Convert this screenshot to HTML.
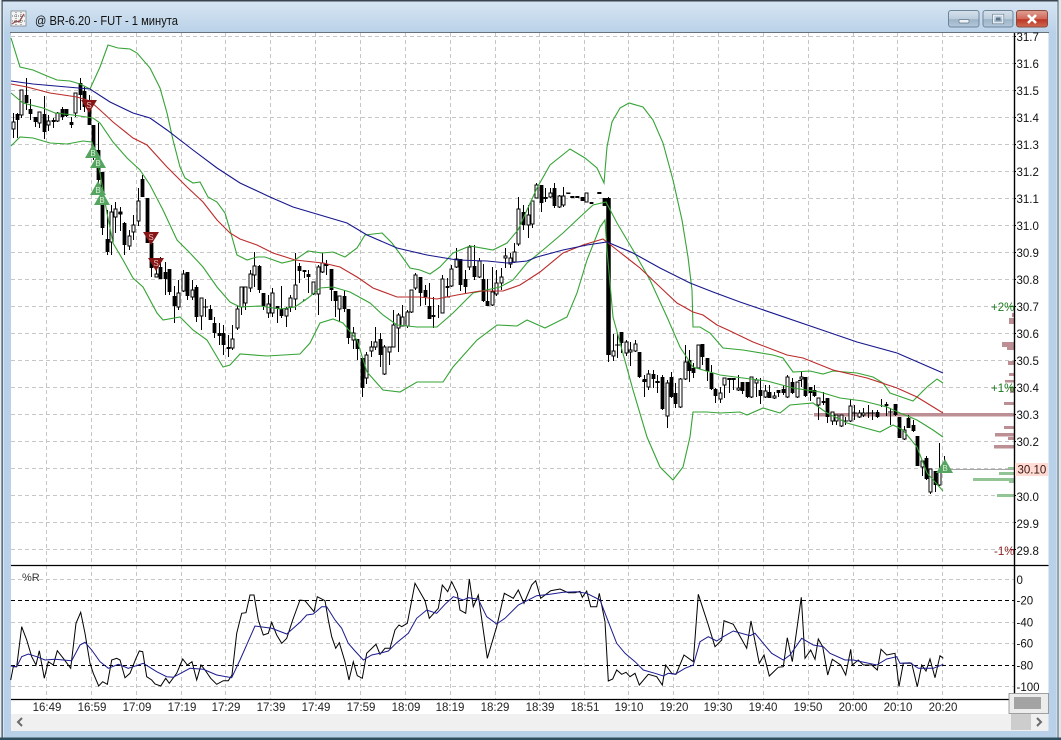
<!DOCTYPE html>
<html><head><meta charset="utf-8"><title>BR-6.20</title>
<style>
html,body{margin:0;padding:0;background:#fff;width:1061px;height:740px;overflow:hidden}
svg{display:block;font-family:"Liberation Sans",sans-serif}
</style></head><body>
<svg width="1061" height="740" viewBox="0 0 1061 740" xmlns="http://www.w3.org/2000/svg">
<defs>
<linearGradient id="tb" x1="0" y1="0" x2="0" y2="1"><stop offset="0" stop-color="#d8e6f3"/><stop offset="1" stop-color="#b9d1e8"/></linearGradient>
<linearGradient id="btn" x1="0" y1="0" x2="0" y2="1"><stop offset="0" stop-color="#d6e2ec"/><stop offset=".5" stop-color="#bccddd"/><stop offset=".55" stop-color="#9db3c7"/><stop offset="1" stop-color="#b4c9db"/></linearGradient>
<linearGradient id="cls" x1="0" y1="0" x2="0" y2="1"><stop offset="0" stop-color="#dfa193"/><stop offset=".5" stop-color="#d1695a"/><stop offset=".55" stop-color="#bb3626"/><stop offset="1" stop-color="#cf6a50"/></linearGradient>
</defs>
<!-- window frame -->
<rect width="1061" height="740" fill="#b9d1e8"/>
<rect x="0" y="0" width="1061" height="33" fill="url(#tb)"/>
<rect x="0" y="0" width="1061" height="1.5" fill="#39444f"/>
<rect x="0" y="0" width="2" height="740" fill="#e9eef2"/>
<rect x="1.5" y="0" width="1.2" height="740" fill="#3a4a58"/>
<rect x="3" y="2" width="1" height="736" fill="#d8e6f3"/>
<rect x="1056.5" y="2" width="1" height="736" fill="#dfeaf4"/>
<rect x="1058" y="0" width="3" height="740" fill="#dfe7ec"/>
<rect x="1057.5" y="0" width="1" height="740" fill="#45606f"/>
<rect x="0" y="737.5" width="1061" height="2.5" fill="#2f4f5e"/>
<rect x="10" y="32" width="1039" height="1.2" fill="#66727e"/>
<!-- client -->
<rect x="11" y="33" width="1037.5" height="681" fill="#fff"/>
<rect x="11" y="714" width="1037.5" height="17" fill="#f0f0f0"/>
<!-- title -->
<g><rect x="11" y="11" width="15" height="15" fill="#f4f4f4" stroke="#7a8591" stroke-width=".8"/>
<path d="M12 24l4-3 3 1 5-8" fill="none" stroke="#a04a4a" stroke-width="1.200"/><path d="M12 16h13M12 21h13M16 12v13M21 12v13" stroke="#444" stroke-width=".8" stroke-dasharray="1 1"/></g>
<text x="35" y="25" font-size="12.5" fill="#111" textLength="143" lengthAdjust="spacingAndGlyphs">@ BR-6.20 - FUT - 1 минута</text>
<!-- buttons -->
<rect x="948.5" y="10.5" width="30.5" height="16.5" rx="2.5" fill="url(#btn)" stroke="#6e8499"/>
<rect x="959" y="19.5" width="10" height="3.5" rx="1" fill="#eef3f7" stroke="#5f7488" stroke-width=".7"/>
<rect x="983" y="10.5" width="30" height="16.5" rx="2.5" fill="url(#btn)" stroke="#6e8499"/>
<rect x="993.5" y="15" width="9.5" height="8" fill="none" stroke="#f0f4f8" stroke-width="1.5"/><rect x="992.6" y="14.2" width="11.2" height="9.6" fill="none" stroke="#5f7488" stroke-width=".6"/><rect x="996" y="17.500" width="4.500" height="3" fill="#5f7488"/>
<rect x="1016.5" y="10.5" width="31" height="16.5" rx="2.5" fill="url(#cls)" stroke="#8a4a40"/>
<path d="M1028 15l8 8M1036 15l-8 8" stroke="#fff" stroke-width="2.6"/>
<!-- grid -->
<path d="M11 36.500H1014M11 63.500H1014M11 90.500H1014M11 117.500H1014M11 144.500H1014M11 171.500H1014M11 198.500H1014M11 225.500H1014M11 252.500H1014M11 279.500H1014M11 306.500H1014M11 333.500H1014M11 360.500H1014M11 387.500H1014M11 414.500H1014M11 441.500H1014M11 468.500H1014M11 495.500H1014M11 522.500H1014M11 549.500H1014M11 579.500H1014M11 622.500H1014M11 643.500H1014M11 686.500H1014" stroke="#c6c6c6" stroke-dasharray="4 3" fill="none"/>
<path d="M46.500 33V699M91.500 33V699M136.500 33V699M181.500 33V699M225.500 33V699M270.500 33V699M315.500 33V699M360.500 33V699M405.500 33V699M450.500 33V699M495.500 33V699M539.500 33V699M584.500 33V699M628.500 33V699M673.500 33V699M718.500 33V699M763.500 33V699M808.500 33V699M853.500 33V699M897.500 33V699M942.500 33V699" stroke="#c6c6c6" stroke-dasharray="4 3" fill="none"/>
<path d="M11 600.500H1014M11 665.500H1014" stroke="#000" stroke-dasharray="4 3" fill="none"/>
<!-- volume profile -->
<g fill="#bb8f93">
<rect x="1012" y="313" width="2" height="4"/><rect x="1009" y="318" width="5" height="6"/><rect x="1002" y="342" width="12" height="5"/><rect x="1007" y="347" width="7" height="3"/><rect x="1008" y="361" width="6" height="4"/><rect x="1009" y="373" width="5" height="3"/><rect x="1005" y="380" width="9" height="2.500"/><rect x="1010" y="388" width="4" height="5"/><rect x="1004" y="402" width="10" height="3"/><rect x="814" y="413" width="200" height="3.500"/><rect x="1004" y="426" width="10" height="3"/><rect x="995" y="433" width="19" height="3.500"/><rect x="1008" y="437" width="6" height="3"/><rect x="994" y="445" width="20" height="3.500"/>
</g>
<g fill="#93c496">
<rect x="1008" y="467" width="6" height="3"/><rect x="999" y="472" width="15" height="3"/><rect x="973" y="478" width="41" height="3"/><rect x="1009" y="481" width="5" height="2"/><rect x="997" y="494" width="17" height="3"/>
</g>
<path d="M948 469.500H1014" stroke="#a6a6a6"/>
<!-- wicks -->
<path stroke="#000" stroke-width="1" fill="none" d="M13.500 113V138M17.500 113V138M21.500 90V118M26.500 78V110M30.500 99V120M35.500 117V127M39.500 112V128M44.500 96V139M48.500 115V131M53.500 118V128M57.500 112V122M62.500 107V120M66.500 109V117M71.500 117V128M75.500 93V117M80.500 78V110M84.500 87V112M89.500 95V125M93.500 125V160M98.500 123V185M102.500 172V235M107.500 210V255M111.500 205V255M115.500 202V233M120.500 207V231M124.500 222V255M129.500 230V250M133.500 215V240M138.500 188V226M142.500 175V197M147.500 198V243M151.500 243V277M156.500 265V277M160.500 257V279M165.500 262V295M169.500 269V295M174.500 286V323M178.500 280V310M183.500 270V292M187.500 272V300M192.500 280V300M196.500 285V322M201.500 298V330M205.500 299V317M210.500 305V320M214.500 317V338M219.500 323V345M223.500 325V355M228.500 335V357M232.500 325V350M237.500 306V330M241.500 287V315M245.500 287V310M250.500 270V292M254.500 252V287M259.500 265V293M263.500 293V310M268.500 295V318M272.500 288V317M277.500 306V323M281.500 286V318M286.500 307V327M290.500 295V312M295.500 253V310M299.500 263V283M304.500 270V278M308.500 270V293M313.500 282V295M318.500 265V315M322.500 253V273M326.500 260V275M331.500 269V301M335.500 291V317M339.500 296V322M344.500 290V312M348.500 309V344M353.500 327V349M357.500 339V360M362.500 358V397M366.500 352V384M371.500 341V357M375.500 327V350M380.500 333V367M384.500 345V375M389.500 347V365M393.500 310V347M398.500 313V352M402.500 305V326M407.500 310V328M411.500 290V313M415.500 273V290M420.500 277V306M425.500 285V305M429.500 283V319M433.500 297V328M438.500 305V318M442.500 275V313M447.500 278V297M451.500 265V287M456.500 248V268M460.500 259V291M465.500 270V293M469.500 245V270M474.500 245V280M479.500 258V278M483.500 264V302M487.500 279V306M492.500 267V306M496.500 270V296M501.500 268V290M505.500 248V268M510.500 253V268M514.500 243V263M518.500 197V246M523.500 205V230M528.500 205V238M532.500 201V228M536.500 183V198M541.500 185V212M545.500 188V202M550.500 188V198M554.500 183V208M559.500 195V208M563.500 187V207M608.500 197V362M613.500 334V361M617.500 334V358M621.500 332V353M626.500 340V356M630.500 342V366M635.500 340V352M639.500 352V378M644.500 375V397M648.500 370V390M653.500 370V388M657.500 375V393M662.500 375V410M667.500 380V428M671.500 372V398M675.500 383V408M680.500 378V408M685.500 345V380M689.500 350V382M693.500 363V378M698.500 345V368M702.500 344V365M707.500 358V381M711.500 365V390M715.500 388V403M720.500 387V403M724.500 378V398M729.500 378V393M733.500 378V390M738.500 375V391M742.500 382V394M747.500 382V398M751.500 377V398M756.500 378V397M760.500 378V404M765.500 385V398M769.500 385V398M774.500 392V399M778.500 390V397M783.500 385V395M787.500 375V398M792.500 378V394M797.500 382V398M801.500 372V387M805.500 377V397M810.500 387V401M814.500 385V397M818.500 398V420M823.500 392V405M827.500 398V423M832.500 412V425M836.500 415V425M841.500 415V427M845.500 417V425M850.500 399V422M854.500 405V420M859.500 410V418M863.500 408V417M868.500 405V418M872.500 410V420M877.500 410V418M881.500 399V407M886.500 402V416M890.500 408V425M895.500 404V416M899.500 417V438M904.500 426V440M908.500 415V428M913.500 420V432M917.500 436V466M922.500 461V476M926.500 456V480M930.500 469V494M935.500 471V492M939.500 443V486M944.500 456V472"/>
<!-- black bodies -->
<path stroke="#000" stroke-width="3.800" fill="none" d="M17.500 114V120M26.500 95V103M30.500 109V114M35.500 117V122M44.500 114V132M53.500 120V122M62.500 109V117M66.500 109V116M71.500 122V125M80.500 83V95M84.500 91V107M89.500 108V125M93.500 125V155M98.500 150V180M102.500 172V228M107.500 239V252M124.500 223V245M142.500 179V197M147.500 198V243M151.500 243V268M160.500 267V279M165.500 272V279M169.500 269V292M174.500 296V306M187.500 272V296M196.500 287V317M210.500 309V320M214.500 323V333M219.500 333V336M223.500 333V345M228.500 347V349M259.500 266V290M263.500 293V306M277.500 306V309M281.500 309V316M299.500 266V271M304.500 270V272M308.500 274V277M326.500 264V266M331.500 269V290M335.500 291V301M344.500 296V309M348.500 309V338M357.500 339V349M362.500 358V388M380.500 339V355M420.500 277V293M425.500 290V297M429.500 306V319M433.500 315V317M447.500 286V288M460.500 259V285M465.500 279V287M474.500 266V277M483.500 279V301M487.500 301V306M523.500 212V225M541.500 185V203M545.500 197V199M554.500 188V206M582.500 197V201M591.500 202V204M604.500 198V206M621.500 332V343M639.500 352V377M644.500 379V382M653.500 374V379M657.500 381V383M662.500 377V409M671.500 377V397M675.500 393V404M689.500 360V371M693.500 368V373M702.500 344V357M707.500 358V371M711.500 373V389M715.500 389V396M742.500 382V391M747.500 382V397M760.500 390V396M769.500 392V398M778.500 390V393M783.500 389V393M792.500 382V393M805.500 377V396M810.500 387V393M814.500 390V396M823.500 401V403M827.500 398V417M877.500 412V417M886.500 404V406M895.500 404V415M899.500 417V438M908.500 418V428M913.500 425V431M917.500 436V466M926.500 458V479M935.500 471V485M568.500 192.500V194M572.500 196V198M577.500 196V198M599.500 192V194M729.500 378V380M733.500 378V380M800 380V381"/>
<path stroke="#000" stroke-width="4.500" fill="none" d="M608.500 198V355"/>
<!-- white bodies -->
<path stroke="#000" stroke-width="1" fill="#fff" d="M12 122h3v7h-3zM20 90h3v25h-3zM38 112h3v11h-3zM47 121h3v4h-3zM56 113h3v8h-3zM74 93h3v20h-3zM110 212h3v30h-3zM114 209h3v8h-3zM119 212h3v2h-3zM128 236h3v10h-3zM132 225h3v7h-3zM137 201h3v20h-3zM155 274h3v3h-3zM177 293h3v14h-3zM182 274h3v17h-3zM191 290h3v7h-3zM200 298h3v18h-3zM231 339h3v9h-3zM236 309h3v19h-3zM240 287h3v20h-3zM244 287h3v16h-3zM249 274h3v14h-3zM253 266h3v9h-3zM267 304h3v9h-3zM271 293h3v20h-3zM285 309h3v7h-3zM289 298h3v9h-3zM294 285h3v14h-3zM312 282h3v12h-3zM317 267h3v27h-3zM321 263h3v9h-3zM338 296h3v13h-3zM352 333h3v7h-3zM365 355h3v23h-3zM370 347h3v4h-3zM374 342h3v5h-3zM383 347h3v27h-3zM388 347h3v5h-3zM392 325h3v22h-3zM397 315h3v13h-3zM401 317h3v9h-3zM406 312h3v14h-3zM410 290h3v22h-3zM414 275h3v13h-3zM441 279h3v34h-3zM450 269h3v17h-3zM455 259h3v8h-3zM468 247h3v20h-3zM478 261h3v16h-3zM491 292h3v13h-3zM495 283h3v11h-3zM500 277h3v6h-3zM504 256h3v2h-3zM509 258h3v6h-3zM513 252h3v10h-3zM517 209h3v35h-3zM527 215h3v10h-3zM531 201h3v23h-3zM535 185h3v13h-3zM549 193h3v4h-3zM558 196h3v11h-3zM562 196h3v9h-3zM585 193h3v9h-3zM612 351h3v5h-3zM625 342h3v11h-3zM629 350h3v2h-3zM634 344h3v7h-3zM647 374h3v13h-3zM666 383h3v33h-3zM679 379h3v28h-3zM684 362h3v17h-3zM697 345h3v23h-3zM719 393h3v6h-3zM723 378h3v7h-3zM737 388h3v2h-3zM750 377h3v20h-3zM755 380h3v3h-3zM764 391h3v6h-3zM773 396h3v2h-3zM786 377h3v20h-3zM796 382h3v15h-3zM800 377h3v2h-3zM817 398h3v7h-3zM831 412h3v9h-3zM835 415h3v6h-3zM840 415h3v11h-3zM849 406h3v15h-3zM858 413h3v4h-3zM862 413h3v2h-3zM903 430h3v9h-3zM921 461h3v6h-3zM929 469h3v23h-3zM938 471h3v14h-3z"/>
<path stroke="#000" stroke-width="1" fill="none" d="M118 213h4M203 307h5M303 300h3M445 297h5M543 198h5M615 345h5M642 381h4M655 382h5M727 379h5M731 379h5M843 421h5M852 413h5M866 413h5M870 413h5M888 412h5M566 193h4M570 197h4M575 197h4M597 193h4"/>
<!-- bollinger -->
<g fill="none" stroke="#35a335" stroke-width="1.100">
<path d="M11 38L20 67 33 70 47 76 57 80 70 81 80 84 90 89 100 67 108 45 118 48 130 49 137 53 150 68 160 88 167 113 173 140 180 167 185 178 193 183 200 182 208 197 217 202 225 213 230 230 237 255 247 260 257 257 265 257 282 263 295 260 308 251 322 253 333 252 345 257 357 248 365 235 382 233 392 243 403 258 410 268 420 270 430 274 440 267 453 253 470 246 493 250 507 243 518 230 527 210 537 188 550 165 570 149 585 158 597 168 604 183 607 147 612 122 620 108 629 103 643 107 653 120 663 143 673 180 682 220 688 257 692 290 693 327 700 327 710 333 723 348 743 350 773 355 783 358 793 372 810 371 823 374 833 371 857 373 873 377 883 383 890 393 913 401 927 387 937 379 943 383"/>
<path d="M11 93L23 103 43 108 55 113 73 115 93 118 100 123 113 142 127 158 140 170 150 185 163 210 177 240 190 253 203 267 217 287 230 302 240 307 260 306 280 309 295 307 308 298 320 288 333 287 350 292 370 303 383 315 397 325 417 327 437 327 453 313 473 293 500 287 513 280 527 263 543 250 563 233 580 217 593 205 606 202 617 223 633 250 650 280 667 317 680 347 693 367 703 370 720 375 743 378 767 381 793 388 820 392 840 398 863 401 887 407 900 413 917 420 933 430 943 437"/>
<path d="M11 146L20 137 33 138 50 143 67 144 83 141 92 142 100 173 107 213 113 243 123 260 133 278 143 287 157 313 163 320 180 317 193 330 207 340 223 367 230 365 240 354 267 356 300 354 310 343 320 323 333 319 343 323 357 340 367 372 383 390 400 392 417 382 443 382 453 367 477 340 497 325 517 326 527 320 545 328 567 317 577 293 587 260 600 227 605 220 607 250 613 317 633 390 647 437 660 467 673 480 683 467 690 437 693 412 707 412 720 413 740 412 747 415 763 408 780 413 790 405 813 403 827 413 847 423 880 432 893 425 903 430 917 447 927 473 943 491"/>
</g>
<!-- red MA -->
<path fill="none" stroke="#bb2a2a" stroke-width="1.100" d="M11 84L27 87 50 93 77 97 90 101 100 110 113 122 133 138 147 145 167 167 187 187 203 202 217 220 230 233 240 239 257 245 273 253 295 260 323 263 340 267 357 277 373 288 397 297 420 297 437 299 457 295 480 291 503 291 520 285 540 272 563 253 583 245 603 239 617 250 640 268 660 287 677 303 693 312 703 315 717 325 728 330 753 342 787 355 803 358 833 370 867 378 897 388 917 397 943 413"/>
<!-- blue MA -->
<path fill="none" stroke="#16168c" stroke-width="1.100" d="M11 81L33 84 67 87 90 89 110 102 133 113 150 118 167 130 193 150 217 168 240 183 270 197 293 207 320 215 347 223 367 235 397 248 427 255 457 260 487 261 507 263 527 261 537 257 563 250 587 245 607 242 633 253 660 268 690 283 713 292 740 302 822 330 857 342 897 353 920 363 943 373"/>
<!-- signal markers -->
<g fill="#861515"><path d="M81 100h16l-8 13z"/><path d="M143 232h16l-8 13z"/><path d="M148 258h16l-8 13z"/></g>
<g fill="#55a561"><path d="M85 158h16l-8-14z"/><path d="M90 168h16l-8-14z"/><path d="M90 195h16l-8-14z"/><path d="M94 205h16l-8-14z"/><path d="M936 473h17l-8-14z"/></g>
<g font-size="8" fill="#e8bcbc" text-anchor="middle"><text x="89" y="108">S</text><text x="151" y="240">S</text><text x="156" y="266">S</text></g>
<g font-size="8" fill="#d8efd8" text-anchor="middle"><text x="93" y="156">B</text><text x="98" y="166">B</text><text x="98" y="193">B</text><text x="102" y="203">B</text><text x="945" y="471">B</text></g>
<!-- %R -->
<path fill="none" stroke="#000" stroke-width="1" d="M10.700 680L13.300 666.700 16.700 666.700 21.700 626.700 26.700 640 31.700 656.700 36 665 39.300 650.700 44.300 678.300 48.300 661.700 53.300 665 57.300 650.700 63.300 658.300 70.700 668.300 76 623.300 80.700 612.300 85 633.300 90 663.300 93.300 673.300 98.700 686 102.700 681.700 107.300 684.300 111.700 660 116.700 658.300 120 660 125 677.700 130 673.300 136 658.300 139.300 651 142.700 651.700 146.700 676.700 151.700 680 155 684 160.700 686 165.700 678.300 169.300 683.300 176.700 673.300 182.700 659 187.300 665 192 661.700 196.700 680 201 665 205 670 210.700 678.300 216.700 684.300 223.300 680.700 228.300 680.700 232 675 236.700 633.300 241.700 613.300 246 612.700 250 595 254 595 258.300 620 263.300 635 268.300 633.300 271.700 622.300 276.700 635 281.700 643.300 286.700 638.300 292.700 620 300 600 305 600.700 314 611.700 317.300 596.700 325 600.700 328.300 620 331.700 636.700 335.700 648.300 339.300 642.700 345 661.700 349 680 353.300 661.700 357.300 675.700 362.300 678.300 366.700 653.300 376 644.300 380 654.300 385 648.300 390 648.300 395 630 399 625 401.700 626.700 407.300 623.300 415 583.300 425 600.700 429.300 618.300 438.300 608.300 442.300 585 447.700 591.700 451.700 581.700 457.300 593.300 460 610 465.700 613.300 469.300 579 473.300 606.700 478.300 595 487.300 658.300 496.700 626.700 504.300 593.300 513.300 598.300 518.300 590 524 603.300 531.700 585 535.700 580.700 540.700 598.300 550.700 590.700 560 589 568.300 592.700 575 592.700 580 591.300 582.300 597.300 586.700 591 590.700 606.700 596.700 606.700 599.300 593.300 605 621.700 608.300 681 612.700 679 616.700 670 621.700 674.300 626 672.300 630 676.700 635 673.300 639.300 685 648.300 674.300 656.700 676.700 662.300 685 665.700 665 671.700 673.300 676 674.300 684 655 693.300 661.700 698.300 594.300 708.300 625 715 646.700 721.700 640 724 620.700 733.300 624.300 746.700 648.300 751 621 759.300 663.300 764 655 769.300 676 778.300 667.300 783.300 666.700 787.300 637.700 792.300 661.700 801.300 597.300 805 658.300 810.700 650 815 659.300 818.300 639 822.700 646.700 827.700 675 832.300 659.300 840.700 665 845.700 675 850.700 649.300 852.300 665 858.300 660 863.300 665 871.700 665 877.300 670 881 649.300 886.700 655 895 653.300 899 686.700 903.300 663.300 911.700 663.300 917.300 686.700 921.700 665 926 671 930 659 935 677.700 940 655.700 943.300 658.300"/>
<path fill="none" stroke="#1a1a8e" stroke-width="1" d="M10.700 666L16.700 666.700 21.700 656.700 28.300 654 36.700 656.700 45 660 55 659.300 71.700 660.700 80 645 85 642.300 91.700 650 100 661.700 108.300 668.300 118.300 664.300 128.300 668.300 143.300 663.300 156.700 671.700 166.700 676.700 173.300 677.300 190 668.300 203.300 669.300 216.700 675 231.700 677.700 240 660 255 626 271.700 628.300 286.700 634 300 622.300 306.700 615 313.300 614 321.700 606.700 326.700 606.700 335 620 341.700 628.300 348.300 643.300 355 651 363.300 660 371.700 655 380 653.300 388.300 651 396.700 642.700 408.300 633.300 416.700 618.300 426.700 610 436.700 613.300 445 604.300 453.300 596.700 463.300 600 468.300 597.700 478.300 599.300 486.700 616.700 496.700 624 505 618.300 518.300 605 536.700 595.700 550 594.300 563.300 592.300 576.700 591.700 586.700 593.300 600 600 608.300 621.700 616.700 643.300 625 653.300 635 661.700 643.300 670 655 673.300 663.300 676 668.300 673.300 675 674.300 685 668.300 693.300 665 700 641.700 708.300 636.700 716.700 641 723.300 636.700 733.300 631 750 635.700 755 633.300 763.300 643.300 771.700 653.300 783.300 660 790 655 801.700 638.300 813.300 645 823.300 646.700 830 653.300 845 660 853.300 660 876.700 665 886.700 659 896.700 656.700 900 663.300 910 662.700 918.300 668.300 933.300 668.300 943.300 664.300"/>
<!-- axes -->
<path d="M1014.500 33V699" stroke="#000" stroke-width="1.400"/>
<path d="M11 565.500H1048.500M11 699.500H1009" stroke="#000" stroke-width="1.200"/>
<g stroke="#000" stroke-width="1"><path d="M1014 36.500h2M1014 63.500h2M1014 90.500h2M1014 117.500h2M1014 144.500h2M1014 171.500h2M1014 198.500h2M1014 225.500h2M1014 252.500h2M1014 279.500h2M1014 306.500h2M1014 333.500h2M1014 360.500h2M1014 387.500h2M1014 414.500h2M1014 441.500h2M1014 495.500h2M1014 522.500h2M1014 549.500h2"/></g>
<rect x="1015" y="463" width="33" height="13" fill="#fedcd3"/>
<!-- price labels -->
<g font-size="11.500" fill="#111">
<text x="1016.500" y="41">31.7</text><text x="1016.500" y="68">31.6</text><text x="1016.500" y="95">31.5</text><text x="1016.500" y="122">31.4</text><text x="1016.500" y="149">31.3</text><text x="1016.500" y="176">31.2</text><text x="1016.500" y="203">31.1</text><text x="1016.500" y="230">31.0</text><text x="1016.500" y="257">30.9</text><text x="1016.500" y="284">30.8</text><text x="1016.500" y="311">30.7</text><text x="1016.500" y="338">30.6</text><text x="1016.500" y="365">30.5</text><text x="1016.500" y="392">30.4</text><text x="1016.500" y="419">30.3</text><text x="1016.500" y="446">30.2</text><text x="1017.500" y="473.500" fill="#3a1010">30.10</text><text x="1016.500" y="501">30.0</text><text x="1016.500" y="528">29.9</text><text x="1016.500" y="555">29.8</text>
<text x="1016.500" y="584">0</text><text x="1016.500" y="604.500">-20</text><text x="1016.500" y="626.500">-40</text><text x="1016.500" y="647.500">-60</text><text x="1016.500" y="669.500">-80</text><text x="1016.500" y="691">-100</text>
</g>
<g font-size="11.500"><text x="991" y="311" fill="#1d7a1d">+2%</text><text x="991" y="392" fill="#1d7a1d">+1%</text><text x="994" y="555" fill="#8a1f1f">-1%</text></g>
<path d="M1010 306.500h4M1010 387.500h4" stroke="#1d7a1d"/><path d="M1010 549.500h4" stroke="#8a1f1f"/>
<text x="22" y="581" font-size="11" fill="#333">%R</text>
<!-- time labels -->
<g font-size="11.500" fill="#222" text-anchor="middle">
<text x="47" y="711">16:49</text><text x="92" y="711">16:59</text><text x="137" y="711">17:09</text><text x="182" y="711">17:19</text><text x="226" y="711">17:29</text><text x="271" y="711">17:39</text><text x="316" y="711">17:49</text><text x="361" y="711">17:59</text><text x="406" y="711">18:09</text><text x="450" y="711">18:19</text><text x="495" y="711">18:29</text><text x="540" y="711">18:39</text><text x="585" y="711">18:51</text><text x="629" y="711">19:10</text><text x="674" y="711">19:20</text><text x="718" y="711">19:30</text><text x="763" y="711">19:40</text><text x="808" y="711">19:50</text><text x="853" y="711">20:00</text><text x="898" y="711">20:10</text><text x="943" y="711">20:20</text>
</g>
<!-- scroll corner + bar -->
<rect x="1009" y="693.500" width="39.500" height="20" fill="#ececec" stroke="#8a8a8a" stroke-width=".8"/>
<rect x="1014" y="697" width="27" height="12" fill="#a3a3a3"/>
<rect x="1011" y="714" width="20" height="16" fill="#cdcdcd"/>
<path d="M1037 718l4 4-4 4" fill="none" stroke="#6a6a6a" stroke-width="2"/>
<path d="M22 718l-4 4 4 4" fill="none" stroke="#6a6a6a" stroke-width="2"/>
</svg>
</body></html>
